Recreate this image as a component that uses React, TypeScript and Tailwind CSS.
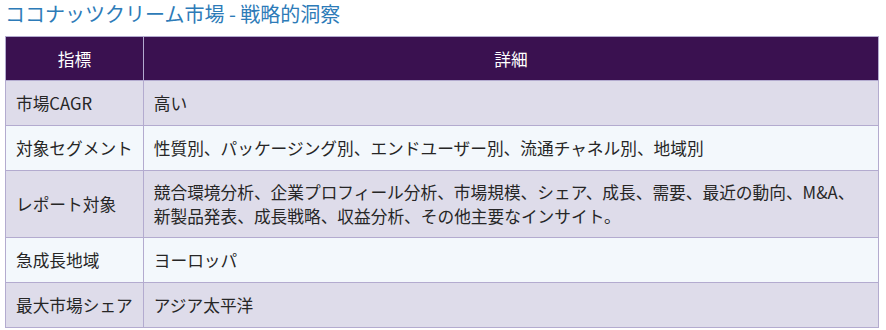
import React from "react";

const rows: [string, string][] = [
  ["市場CAGR", "高い"],
  ["対象セグメント", "性質別、パッケージング別、エンドユーザー別、流通チャネル別、地域別"],
  [
    "レポート対象",
    "競合環境分析、企業プロフィール分析、市場規模、シェア、成長、需要、最近の動向、M&A、新製品発表、成長戦略、収益分析、その他主要なインサイト。",
  ],
  ["急成長地域", "ヨーロッパ"],
  ["最大市場シェア", "アジア太平洋"],
];

export default function App() {
  return (
    <div
      className="w-[886px] h-[330px] bg-white overflow-hidden pt-[1px]"
      style={{ fontFamily: '"Noto Sans CJK JP", "Noto Sans", sans-serif' }}
    >
      <div className="pl-[5px] text-[20px] leading-[26px] text-[#2d7bb8] mb-[9px]">
        ココナッツクリーム市場 - 戦略的洞察
      </div>
      <table className="ml-[5px] w-[874px] border-collapse text-[16.7px] leading-[24px] text-[#262626]">
        <thead>
          <tr className="bg-[#3a1150] text-white">
            <th className="w-[137px] h-[44px] border border-[#b3abcf] px-[10px] py-0 font-normal text-center">
              指標
            </th>
            <th className="h-[44px] border border-[#b3abcf] px-[10px] py-0 font-normal text-center">
              詳細
            </th>
          </tr>
        </thead>
        <tbody>
          {rows.map(([k, v], i) => (
            <tr key={k} className={i % 2 === 0 ? "bg-[#dedcea]" : "bg-[#f3f8fc]"}>
              <td className="h-[45px] border border-[#b3abcf] px-[10px] py-[9px] align-middle whitespace-nowrap">
                {k}
              </td>
              <td className="h-[45px] border border-[#b3abcf] px-[10px] py-[9px] align-middle">{v}</td>
            </tr>
          ))}
        </tbody>
      </table>
    </div>
  );
}
